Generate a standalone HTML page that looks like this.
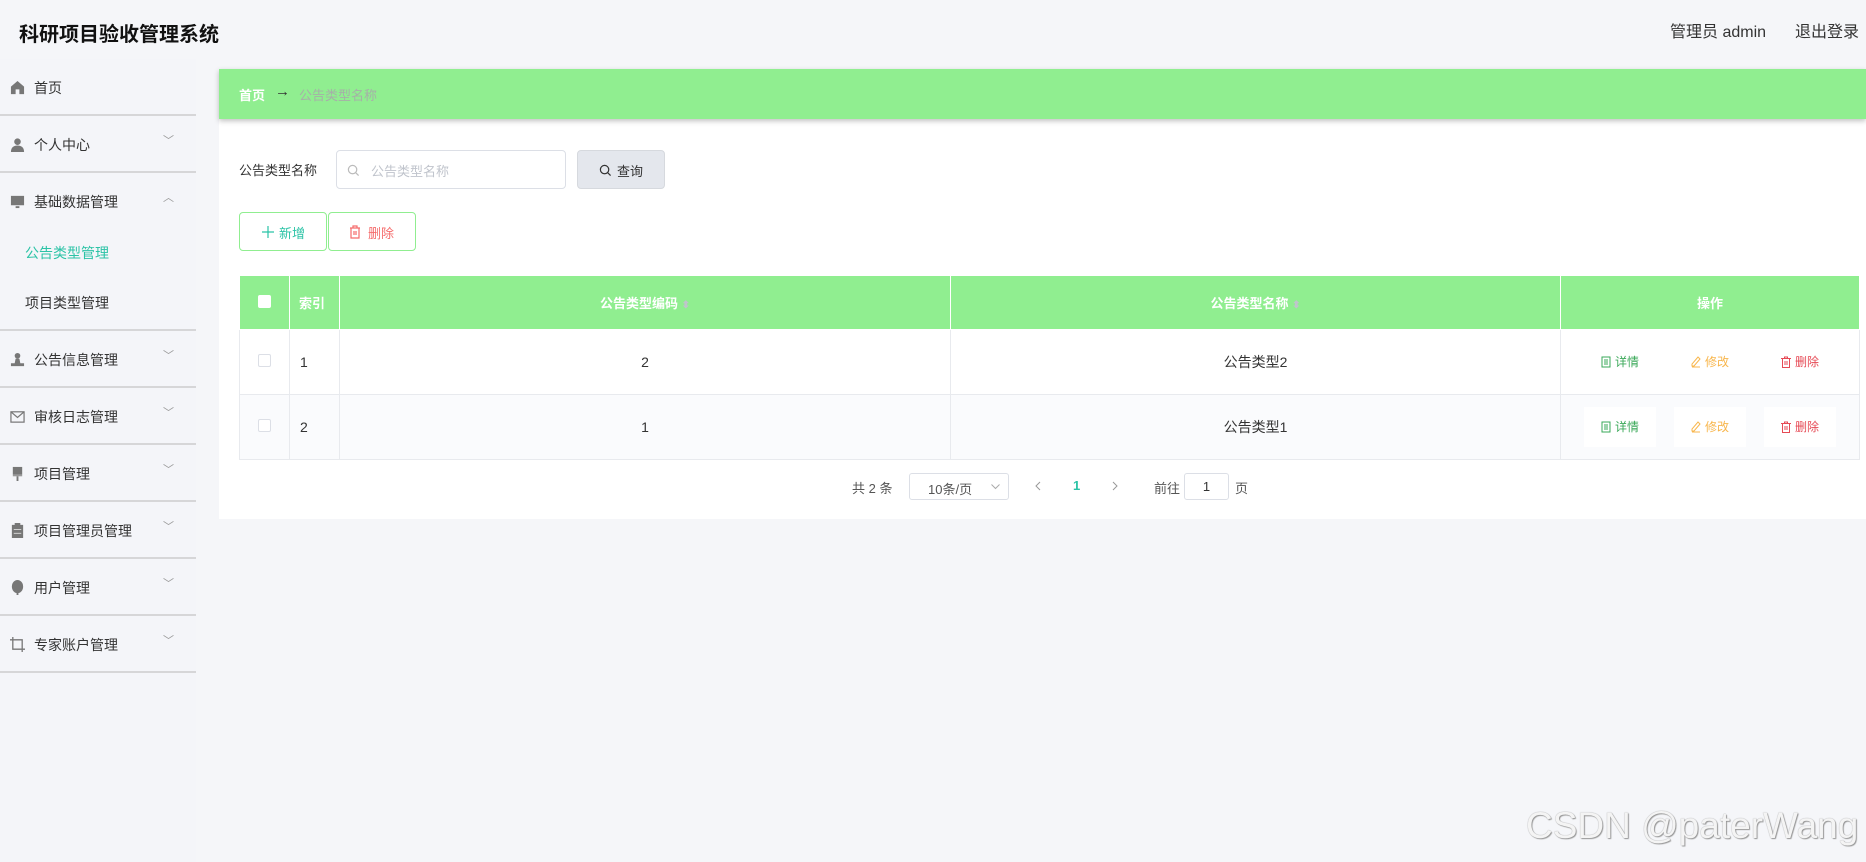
<!DOCTYPE html>
<html><head><meta charset="utf-8"><style>
*{box-sizing:border-box;margin:0;padding:0}
body{width:1866px;height:862px;background:#f5f6f9;font-family:"Liberation Sans","Noto Sans CJK SC",sans-serif;position:relative;overflow:hidden;color:#333}
.a{position:absolute}
.title{left:19px;top:18px;font-size:20px;font-weight:bold;color:#111}
.hr{top:18px;font-size:16px;color:#333}
.side{left:0;top:59px;width:196px;height:803px;background:#f4f5f9}
.mi{position:absolute;left:0;width:196px;height:57px;border-bottom:2px solid #d6d6d8;font-size:14px;color:#333}
.mi .ic{position:absolute;left:10px;top:21px;width:15px;height:15px}
.mi .t{position:absolute;left:34px;top:19px}
.mi .ch{position:absolute;left:163px;top:16px;font-size:11px;color:#999}
.sub{position:absolute;left:25px;font-size:14px}
.panel{left:219px;top:69px;width:1647px;height:450px;background:#fff}
.bc{left:219px;top:69px;width:1647px;height:50px;background:#90ee90;box-shadow:0 2px 5px rgba(0,0,0,.25)}
table{position:absolute;left:239px;top:275px;width:1621px;border-collapse:collapse;font-size:14px}
td,th{border:1px solid #e8eaee;text-align:center}
th{background:#90ee90;color:#fff;height:54px;font-weight:bold;font-size:13px;border-color:#fff}
td{height:65px}
tr.r2 td{background:#fafbfd}
.cb{display:inline-block;width:13px;height:13px;border:1px solid #dcdfe6;border-radius:2px;background:#fff}
.act{display:inline-block;width:72px;height:40px;line-height:40px;font-size:12px;margin:0 9px}
.act svg{vertical-align:-2px;margin-right:4px}
</style></head><body>
<div class="a title">科研项目验收管理系统</div>
<div class="a hr" style="left:1670px">管理员 admin</div>
<div class="a hr" style="left:1795px">退出登录</div>

<div class="a side">
 <div class="mi" style="top:0"><svg class="ic" viewBox="0 0 16 16"><path d="M8 1L1 7v8h5v-5h4v5h5V7z" fill="#777"/></svg><span class="t">首页</span></div>
 <div class="mi" style="top:57px"><svg class="ic" viewBox="0 0 16 16"><circle cx="8" cy="5" r="3.5" fill="#777"/><path d="M1 16c0-5 3-7 7-7s7 2 7 7z" fill="#777"/></svg><span class="t">个人中心</span><span class="ch">﹀</span></div>
 <div class="mi" style="top:114px;height:158px"><svg class="ic" viewBox="0 0 16 16"><rect x="1" y="2" width="14" height="10" fill="#777"/><rect x="6" y="13" width="4" height="2" fill="#777"/></svg><span class="t">基础数据管理</span><span class="ch">︿</span>
  <span class="sub" style="top:70px;color:#2bc3a6">公告类型管理</span>
  <span class="sub" style="top:120px">项目类型管理</span></div>
 <div class="mi" style="top:272px"><svg class="ic" viewBox="0 0 16 16"><circle cx="8" cy="4" r="3" fill="#777"/><path d="M6 7h4l1 5h4v3H1v-3h4z" fill="#777"/></svg><span class="t">公告信息管理</span><span class="ch">﹀</span></div>
 <div class="mi" style="top:329px"><svg class="ic" viewBox="0 0 16 16"><rect x="1" y="3" width="14" height="11" fill="none" stroke="#777" stroke-width="1.3"/><path d="M1 3l7 6 7-6" fill="none" stroke="#777" stroke-width="1.3"/></svg><span class="t">审核日志管理</span><span class="ch">﹀</span></div>
 <div class="mi" style="top:386px"><svg class="ic" viewBox="0 0 16 16"><rect x="3" y="1" width="10" height="8" fill="#777"/><rect x="3" y="9" width="10" height="2" fill="#999"/><rect x="7" y="11" width="2" height="5" fill="#777"/></svg><span class="t">项目管理</span><span class="ch">﹀</span></div>
 <div class="mi" style="top:443px"><svg class="ic" viewBox="0 0 16 16"><rect x="2" y="2" width="12" height="14" fill="#777"/><rect x="5" y="0" width="6" height="3" fill="#777"/><path d="M4 7h8M4 11h8" stroke="#ddd"/></svg><span class="t">项目管理员管理</span><span class="ch">﹀</span></div>
 <div class="mi" style="top:500px"><svg class="ic" viewBox="0 0 16 16"><ellipse cx="8" cy="7" rx="6" ry="7" fill="#777"/><rect x="7" y="13" width="2" height="3" fill="#777"/></svg><span class="t">用户管理</span><span class="ch">﹀</span></div>
 <div class="mi" style="top:557px"><svg class="ic" viewBox="0 0 16 16"><path d="M3 0v13h13M0 3h13v13" fill="none" stroke="#777" stroke-width="1.4"/></svg><span class="t">专家账户管理</span><span class="ch">﹀</span></div>
</div>

<div class="a panel"></div>
<div class="a bc"><span class="a" style="left:20px;top:16px;color:#fff;font-weight:bold;font-size:13px">首页</span><span class="a" style="left:56px;top:14px;color:#333;font-size:15px">→</span><span class="a" style="left:80px;top:16px;color:#a6b0a8;font-size:13px">公告类型名称</span></div>

<div class="a" style="left:239px;top:160px;font-size:13px">公告类型名称</div>
<div class="a" style="left:336px;top:150px;width:230px;height:39px;border:1px solid #dcdfe6;border-radius:4px;background:#fff"><svg class="a" style="left:10px;top:13px" width="13" height="13" viewBox="0 0 14 14"><circle cx="6" cy="6" r="4.5" fill="none" stroke="#bbb" stroke-width="1.3"/><path d="M9.5 9.5l3 3" stroke="#bbb" stroke-width="1.3"/></svg><span class="a" style="left:34px;top:10px;font-size:13px;color:#c0c4cc">公告类型名称</span></div>
<div class="a" style="left:577px;top:150px;width:88px;height:39px;border:1px solid #d6d9de;border-radius:4px;background:#e4e7ed;font-size:13px"><svg class="a" style="left:21px;top:13px" width="13" height="13" viewBox="0 0 14 14"><circle cx="6" cy="6" r="4.5" fill="none" stroke="#333" stroke-width="1.3"/><path d="M9.5 9.5l3 3" stroke="#333" stroke-width="1.3"/></svg><span class="a" style="left:39px;top:10px">查询</span></div>

<div class="a" style="left:239px;top:212px;width:88px;height:39px;border:1px solid #90ee90;border-radius:4px;background:#fff;font-size:13px;color:#2bc3a6"><svg class="a" style="left:22px;top:13px" width="12" height="12" viewBox="0 0 12 12"><path d="M6 0v12M0 6h12" stroke="#2bc3a6" stroke-width="1.2"/></svg><span class="a" style="left:39px;top:10px">新增</span></div>
<div class="a" style="left:328px;top:212px;width:88px;height:39px;border:1px solid #90ee90;border-radius:4px;background:#fff;font-size:13px;color:#f56c6c"><svg class="a" style="left:20px;top:12px" width="12" height="14" viewBox="0 0 12 14"><path d="M1 3h10M4 3V1h4v2M2 3v10h8V3M5 6v4M7 6v4" fill="none" stroke="#f56c6c" stroke-width="1.2"/></svg><span class="a" style="left:39px;top:10px">删除</span></div>

<table>
<tr><th style="width:50px"><span class="cb" style="border-color:#fff"></span></th><th style="width:50px;text-align:left;padding-left:9px">索引</th><th style="width:611px">公告类型编码 <span style="color:#c0c4cc;font-size:10px">⬍</span></th><th style="width:610px">公告类型名称 <span style="color:#c0c4cc;font-size:10px">⬍</span></th><th>操作</th></tr>
<tr><td><span class="cb"></span></td><td style="text-align:left;padding-left:10px">1</td><td>2</td><td>公告类型2</td><td>
<span class="act" style="color:#3aa858"><svg width="10" height="12" viewBox="0 0 10 12"><rect x="1" y="1" width="8" height="10" fill="none" stroke="#3aa858"/><path d="M3 4h4M3 6h4M3 8h4" stroke="#3aa858"/></svg>详情</span><span class="act" style="color:#f8b64c"><svg width="10" height="12" viewBox="0 0 10 12"><path d="M7 1l2 2-6 7H1V8zM1 11h8" fill="none" stroke="#f8b64c"/></svg>修改</span><span class="act" style="color:#e64a55"><svg width="10" height="12" viewBox="0 0 10 12"><path d="M0 2.5h10M3.5 2.5V1h3v1.5M1.5 2.5v9h7v-9M4 5v4M6 5v4" fill="none" stroke="#e64a55"/></svg>删除</span></td></tr>
<tr class="r2"><td><span class="cb"></span></td><td style="text-align:left;padding-left:10px">2</td><td>1</td><td>公告类型1</td><td>
<span class="act" style="color:#3aa858;background:#fff"><svg width="10" height="12" viewBox="0 0 10 12"><rect x="1" y="1" width="8" height="10" fill="none" stroke="#3aa858"/><path d="M3 4h4M3 6h4M3 8h4" stroke="#3aa858"/></svg>详情</span><span class="act" style="color:#f8b64c;background:#fff"><svg width="10" height="12" viewBox="0 0 10 12"><path d="M7 1l2 2-6 7H1V8zM1 11h8" fill="none" stroke="#f8b64c"/></svg>修改</span><span class="act" style="color:#e64a55;background:#fff"><svg width="10" height="12" viewBox="0 0 10 12"><path d="M0 2.5h10M3.5 2.5V1h3v1.5M1.5 2.5v9h7v-9M4 5v4M6 5v4" fill="none" stroke="#e64a55"/></svg>删除</span></td></tr>
</table>

<div class="a" style="left:852px;top:478px;font-size:13px;color:#555">共 2 条</div>
<div class="a" style="left:909px;top:473px;width:100px;height:27px;border:1px solid #dcdfe6;border-radius:3px;font-size:13px;color:#555"><span class="a" style="left:18px;top:5px">10条/页</span><svg class="a" style="left:81px;top:10px" width="9" height="6" viewBox="0 0 9 6"><path d="M0.5 0.5l4 4 4-4" fill="none" stroke="#aaa"/></svg></div>
<svg class="a" style="left:1035px;top:481px" width="6" height="10" viewBox="0 0 6 10"><path d="M5 1L1 5l4 4" fill="none" stroke="#999"/></svg>
<div class="a" style="left:1073px;top:478px;font-size:13px;color:#2bc3a6;font-weight:bold">1</div>
<svg class="a" style="left:1112px;top:481px" width="6" height="10" viewBox="0 0 6 10"><path d="M1 1l4 4-4 4" fill="none" stroke="#999"/></svg>
<div class="a" style="left:1154px;top:478px;font-size:13px;color:#555">前往</div>
<div class="a" style="left:1184px;top:473px;width:45px;height:27px;border:1px solid #dcdfe6;border-radius:3px;font-size:13px;text-align:center;line-height:25px">1</div>
<div class="a" style="left:1235px;top:478px;font-size:13px;color:#555">页</div>

<div class="a" style="left:1526px;top:805px;font-size:37px;color:#f4f4f4;text-shadow:0 0 1px #888,1px 1px 1px #999;white-space:nowrap">CSDN @paterWang</div>
</body></html>
